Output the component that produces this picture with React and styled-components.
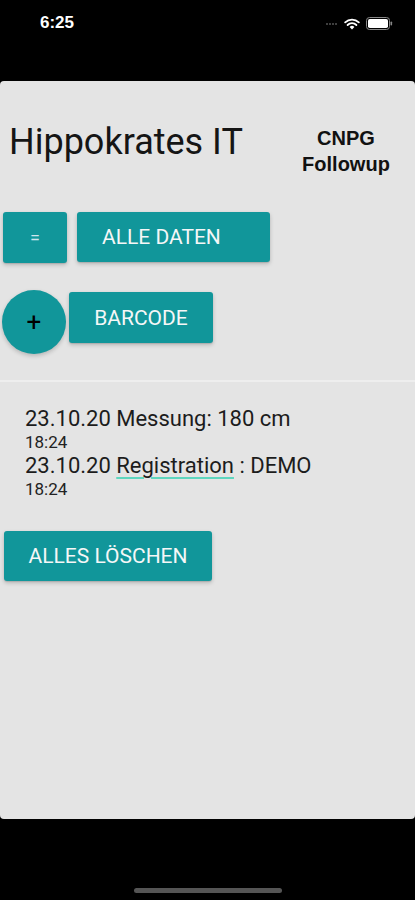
import React from "react";
import styled, { createGlobalStyle } from "styled-components";

const GlobalStyle = createGlobalStyle`
  html, body {
    margin: 0;
    padding: 0;
    background: #000000;
  }
  * {
    box-sizing: border-box;
  }
`;

const TEAL = "#11969a";

const Screen = styled.div`
  width: 415px;
  height: 900px;
  display: flex;
  flex-direction: column;
  background: #000000;
  font-family: Roboto, "Liberation Sans", sans-serif;
  overflow: hidden;
`;

const StatusBar = styled.div`
  height: 81px;
  flex-shrink: 0;
  display: flex;
  justify-content: space-between;
  align-items: flex-start;
  padding: 13px 22px 0 40px;
`;

const Clock = styled.span`
  color: #ffffff;
  font-family: "Liberation Sans", Arial, sans-serif;
  font-weight: 700;
  font-size: 17px;
  line-height: 20px;
`;

const StatusIcons = styled.div`
  display: flex;
  align-items: center;
  gap: 6px;
  margin-top: 4px;
`;

const Panel = styled.div`
  height: 738px;
  flex-shrink: 0;
  background: #e4e4e4;
  border-radius: 4px;
  display: flex;
  flex-direction: column;
`;

const Header = styled.div`
  display: flex;
  justify-content: space-between;
  align-items: flex-start;
  padding: 39.5px 14px 0 9px;
`;

const Title = styled.h1`
  margin: 0;
  font-family: Roboto, sans-serif;
  font-weight: 400;
  font-size: 36px;
  line-height: 42px;
  color: #151515;
`;

const Badge = styled.div`
  width: 110px;
  margin-top: 4.5px;
  text-align: center;
  font-family: "Liberation Sans", Arial, sans-serif;
  font-weight: 700;
  font-size: 20px;
  line-height: 26px;
  color: #111111;
`;

const ButtonRow = styled.div`
  display: flex;
  align-items: flex-start;
  gap: ${(p) => p.gap}px;
  margin-top: ${(p) => p.top}px;
  padding-left: ${(p) => p.left}px;
`;

const Button = styled.button`
  display: flex;
  align-items: center;
  justify-content: ${(p) => (p.align === "left" ? "flex-start" : "center")};
  width: ${(p) => p.w}px;
  height: ${(p) => p.h || 51}px;
  margin-top: ${(p) => p.offset || 0}px;
  padding: 0 0 0 ${(p) => (p.align === "left" ? 25 : 0)}px;
  border: none;
  border-radius: 3px;
  background: ${TEAL};
  color: #f5f7f7;
  font-family: Roboto, sans-serif;
  font-size: 21px;
  font-weight: 400;
  box-shadow: 0 2px 4px rgba(0, 0, 0, 0.2), 0 1px 1px rgba(0, 0, 0, 0.1);
`;

const EqualsGlyph = styled.span`
  color: #cfe6ee;
  font-size: 18px;
  line-height: 1;
`;

const RoundButton = styled.button`
  width: 64px;
  height: 64px;
  border: none;
  border-radius: 50%;
  padding: 0;
  background: ${TEAL};
  color: #000000;
  font-family: Roboto, sans-serif;
  font-weight: 400;
  font-size: 26px;
  line-height: 1;
  display: flex;
  align-items: center;
  justify-content: center;
  box-shadow: 0 2px 4px rgba(0, 0, 0, 0.2);
`;

const Divider = styled.div`
  height: 2px;
  margin-top: 26px;
  background: #eeeeee;
`;

const EntryList = styled.div`
  display: flex;
  flex-direction: column;
  padding: 24px 0 0 25px;
`;

const EntryLine = styled.div`
  font-size: 22px;
  line-height: 26px;
  color: #1c1c1c;
`;

const EntryTime = styled.div`
  font-size: 17px;
  line-height: 21px;
  color: #222222;
`;

const Linked = styled.span`
  text-decoration: underline;
  text-decoration-color: #5fd6bf;
  text-decoration-thickness: 2px;
  text-underline-offset: 4px;
`;

const ClearRow = styled.div`
  margin-top: 31px;
  padding-left: 4px;
`;

const BottomArea = styled.div`
  flex: 1;
  display: flex;
  justify-content: center;
  align-items: flex-end;
  padding-bottom: 7px;
`;

const HomeIndicator = styled.div`
  width: 148px;
  height: 5px;
  border-radius: 3px;
  background: #555555;
`;

const SignalDots = () => (
  <svg width="12" height="4" viewBox="0 0 12 4">
    {[1, 4, 7, 10].map((x) => (
      <circle key={x} cx={x} cy="2" r="1" fill="#555555" />
    ))}
  </svg>
);

const Wifi = () => (
  <svg width="16" height="12" viewBox="0 0 16 12">
    <path d="M8 11.5 L5.6 9 A3.4 3.4 0 0 1 10.4 9 Z" fill="#fff" />
    <path d="M3.6 7 A6.2 6.2 0 0 1 12.4 7" stroke="#fff" strokeWidth="1.8" fill="none" strokeLinecap="round" />
    <path d="M1.2 4.4 A9.6 9.6 0 0 1 14.8 4.4" stroke="#fff" strokeWidth="1.8" fill="none" strokeLinecap="round" />
  </svg>
);

const Battery = () => (
  <svg width="27" height="13" viewBox="0 0 27 13">
    <rect x="0.5" y="0.5" width="23" height="12" rx="3" fill="none" stroke="#888" strokeWidth="1" />
    <rect x="2" y="2" width="20" height="9" rx="1.8" fill="#fff" />
    <rect x="24.5" y="4.5" width="1.6" height="4" rx="0.8" fill="#888" />
  </svg>
);

export default function App() {
  return (
    <>
      <GlobalStyle />
      <Screen>
        <StatusBar>
          <Clock>6:25</Clock>
          <StatusIcons>
            <SignalDots />
            <Wifi />
            <Battery />
          </StatusIcons>
        </StatusBar>

        <Panel>
          <Header>
            <Title>Hippokrates IT</Title>
            <Badge>
              CNPG
              <br />
              Followup
            </Badge>
          </Header>

          <ButtonRow top={35} gap={10} left={3}>
            <Button w={64}>
              <EqualsGlyph>=</EqualsGlyph>
            </Button>
            <Button w={193} h={50} align="left">
              ALLE DATEN
            </Button>
          </ButtonRow>

          <ButtonRow top={27} gap={3} left={2}>
            <RoundButton>+</RoundButton>
            <Button w={144} offset={2}>
              BARCODE
            </Button>
          </ButtonRow>

          <Divider />

          <EntryList>
            <EntryLine>23.10.20 Messung: 180 cm</EntryLine>
            <EntryTime>18:24</EntryTime>
            <EntryLine>
              23.10.20 <Linked>Registration</Linked> : DEMO
            </EntryLine>
            <EntryTime>18:24</EntryTime>
          </EntryList>

          <ClearRow>
            <Button w={208} h={50}>
              ALLES LÖSCHEN
            </Button>
          </ClearRow>
        </Panel>

        <BottomArea>
          <HomeIndicator />
        </BottomArea>
      </Screen>
    </>
  );
}
